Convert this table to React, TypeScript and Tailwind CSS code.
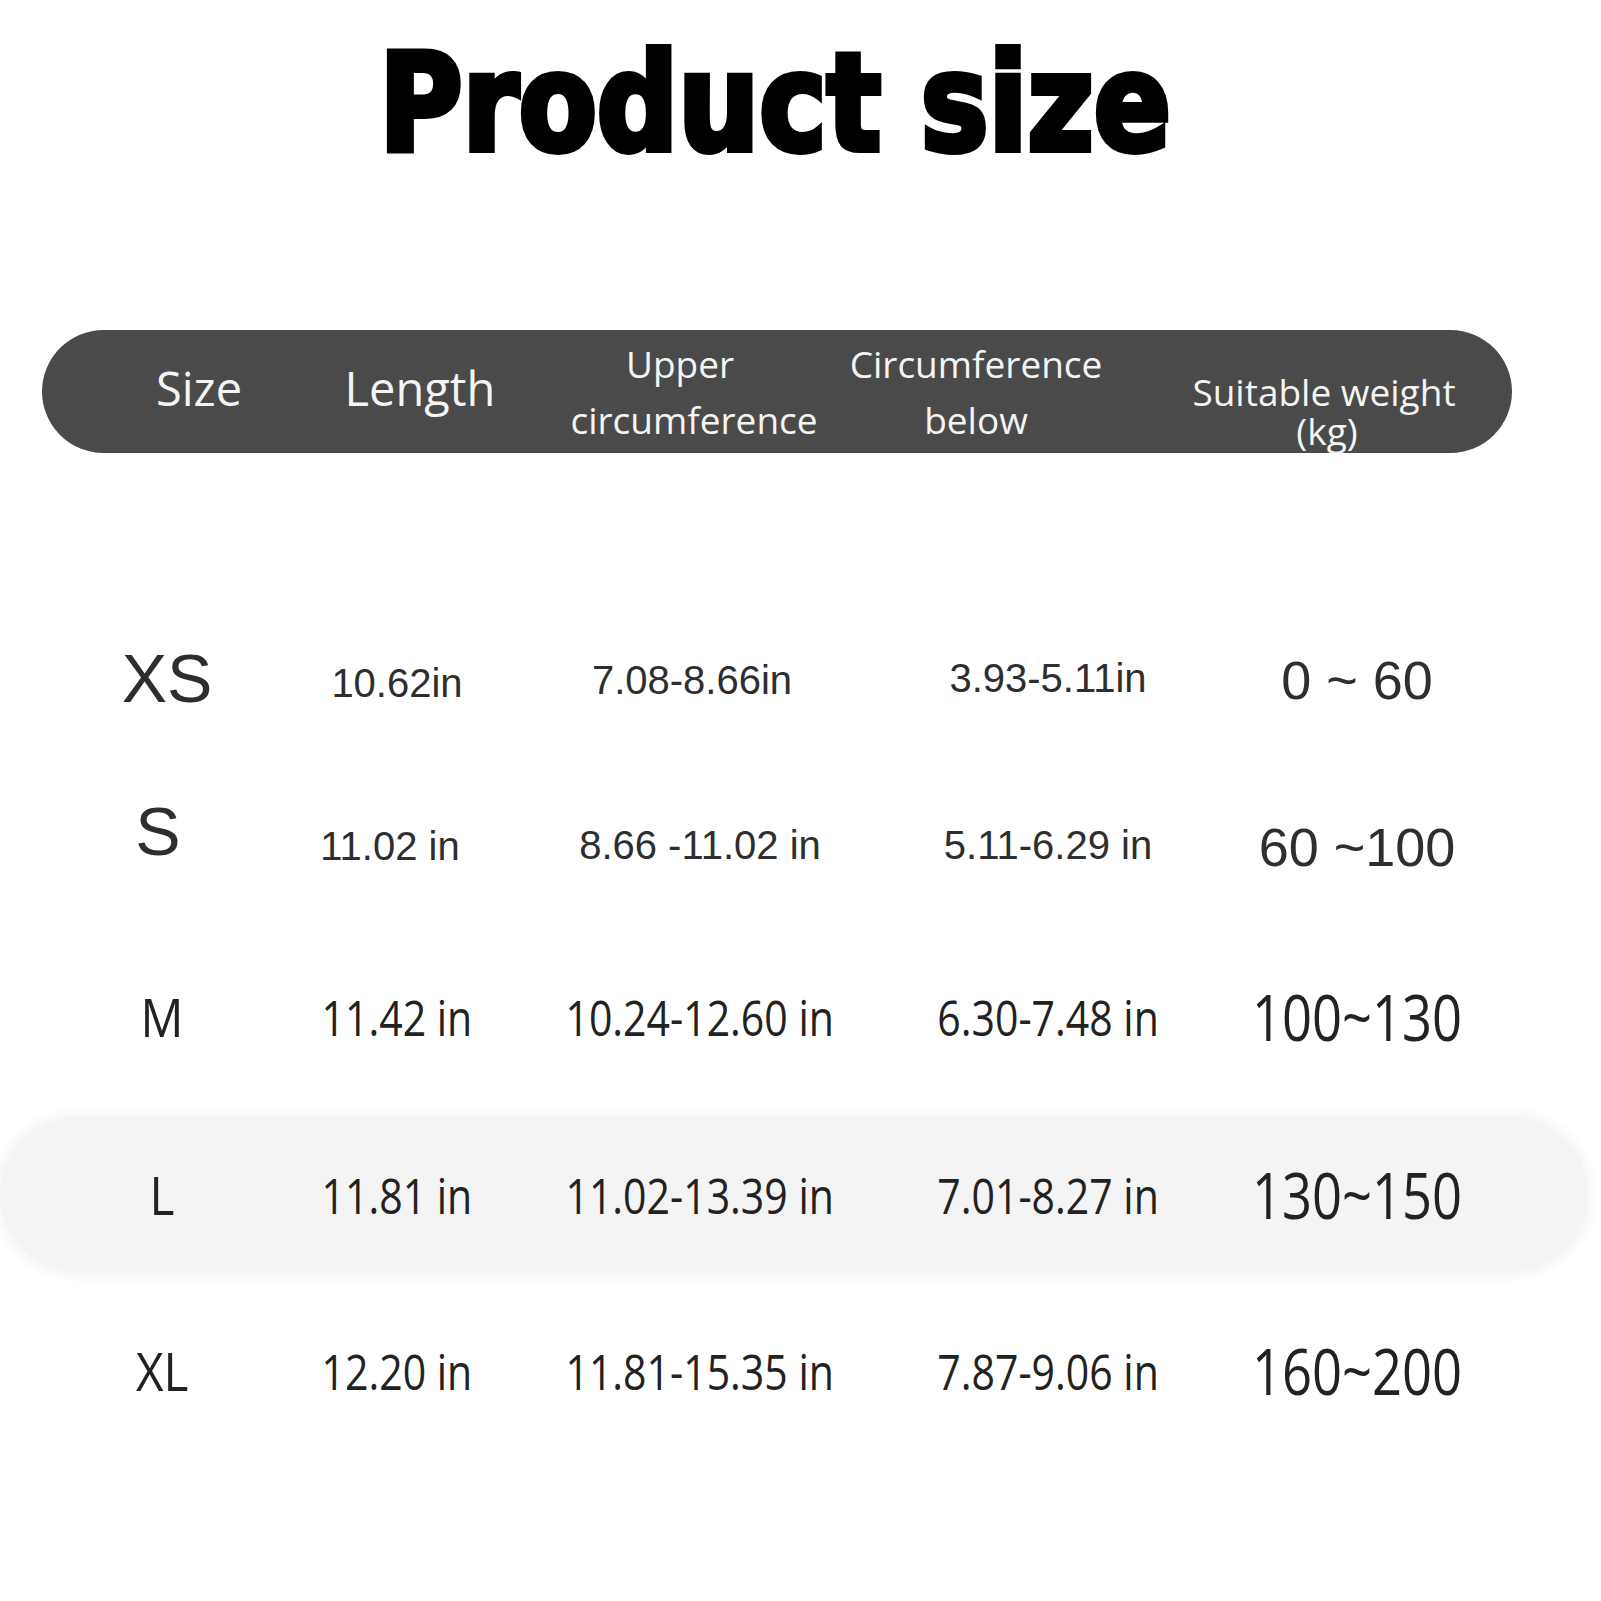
import React from "react";

type Row = {
  size: string;
  length: string;
  upper: string;
  below: string;
  weight: string;
  narrow: boolean;
  band?: boolean;
  gap: string;
};

const ROWS: Row[] = [
  { size: "XS", length: "10.62in", upper: "7.08-8.66in", below: "3.93-5.11in", weight: "0 ~ 60", narrow: false, gap: "mt-0" },
  { size: "S", length: "11.02 in", upper: "8.66 -11.02 in", below: "5.11-6.29 in", weight: "60 ~100", narrow: false, gap: "mt-[12px]" },
  { size: "M", length: "11.42 in", upper: "10.24-12.60 in", below: "6.30-7.48 in", weight: "100~130", narrow: true, gap: "mt-[17px]" },
  { size: "L", length: "11.81 in", upper: "11.02-13.39 in", below: "7.01-8.27 in", weight: "130~150", narrow: true, band: true, gap: "mt-[23px]" },
  { size: "XL", length: "12.20 in", upper: "11.81-15.35 in", below: "7.87-9.06 in", weight: "160~200", narrow: true, gap: "mt-[21px]" },
];

const arial = "font-['Liberation_Sans',Arial,sans-serif]";
const yahei = "font-['Open_Sans','Noto_Sans',sans-serif]";
const head = "font-['Open_Sans','Noto_Sans',sans-serif]";

// cell with fixed width, text centred; narrow rows get a squeezed glyph box
function Cell({ w, text, cls, squeeze }: { w: string; text: string; cls: string; squeeze?: string }) {
  return (
    <div className={`${w} shrink-0 flex justify-center`}>
      <span className={`inline-block ${cls} ${squeeze ?? ""}`}>{text}</span>
    </div>
  );
}

function DataRow({ r }: { r: Row }) {
  if (!r.narrow) {
    const isS = r.size === "S";
    return (
      <div className={`${r.gap} h-[155px] w-[1601px] flex items-center pl-[62px] text-[#2e2e2e] whitespace-nowrap leading-none ${arial}`}>
        <Cell w="w-[200px]" text={r.size} cls={`text-[68px] ${isS ? "mb-[28px] -ml-[8px]" : "ml-[10px]"}`} />
        <Cell w="w-[270px]" text={r.length} cls={`text-[40px] ${isS ? "mt-[2px] -ml-[14px]" : "mt-[10px]"}`} />
        <Cell w="w-[336px]" text={r.upper} cls={`text-[40px] ${isS ? "" : "mt-[4px] -ml-[16px]"}`} />
        <Cell w="w-[360px]" text={r.below} cls="text-[40px]" />
        <Cell w="w-[258px]" text={r.weight} cls="text-[54px] mt-[4px]" />
      </div>
    );
  }
  return (
    <div
      className={`${r.gap} h-[155px] flex items-center pl-[62px] ${
        r.band ? "w-[1588px] rounded-full bg-[#f4f4f4] shadow-[0_0_10px_6px_#f7f7f7]" : "w-[1601px]"
      } text-[#222222] whitespace-nowrap leading-none ${yahei}`}
    >
      <Cell w="w-[200px]" text={r.size} cls="text-[53px]" squeeze="scale-x-[0.9]" />
      <Cell w="w-[270px]" text={r.length} cls="text-[50px]" squeeze="scale-x-[0.82]" />
      <Cell w="w-[336px]" text={r.upper} cls="text-[50px]" squeeze="scale-x-[0.82]" />
      <Cell w="w-[360px]" text={r.below} cls="text-[50px]" squeeze="scale-x-[0.82]" />
      <Cell w="w-[258px]" text={r.weight} cls="text-[64px]" squeeze="scale-x-[0.82]" />
    </div>
  );
}

export default function App() {
  return (
    <div className="w-[1601px] h-[1601px] bg-white overflow-hidden">
      <h1
        className="font-['Liberation_Sans_Narrow','DejaVu_Sans_Condensed',sans-serif] w-[1550px] h-[136px] pt-[35px] box-content text-center text-[136px] leading-none font-bold text-black [-webkit-text-stroke:6px_black] scale-x-[0.93]"
      >
        Product size
      </h1>

      {/* header bar */}
      <div className={`${head} ml-[42px] mt-[159px] w-[1470px] h-[123px] rounded-full bg-[#4a4a4a] flex items-center pl-[47px] text-[#f4f4f4] whitespace-nowrap`}>
        <div className="w-[220px] shrink-0 text-center text-[47px] leading-none -mt-[6px]">Size</div>
        <div className="w-[222px] shrink-0 text-center text-[47px] leading-none -mt-[6px]">Length</div>
        <div className="w-[326px] shrink-0 flex flex-col items-center text-[37px] leading-[56px]">
          <div className="pr-[28px]">Upper</div>
          <div>circumference</div>
        </div>
        <div className="w-[238px] shrink-0 flex flex-col items-center text-[37px] leading-[56px]">
          <div>Circumference</div>
          <div>below</div>
        </div>
        <div className="w-[458px] shrink-0 flex flex-col items-center text-[37px] leading-[39px] mt-[39px]">
          <div>Suitable weight</div>
          <div className="pl-[6px]">(kg)</div>
        </div>
      </div>

      <div className="mt-[147px] flex flex-col">
        {ROWS.map((r) => (
          <DataRow key={r.size} r={r} />
        ))}
      </div>
    </div>
  );
}
